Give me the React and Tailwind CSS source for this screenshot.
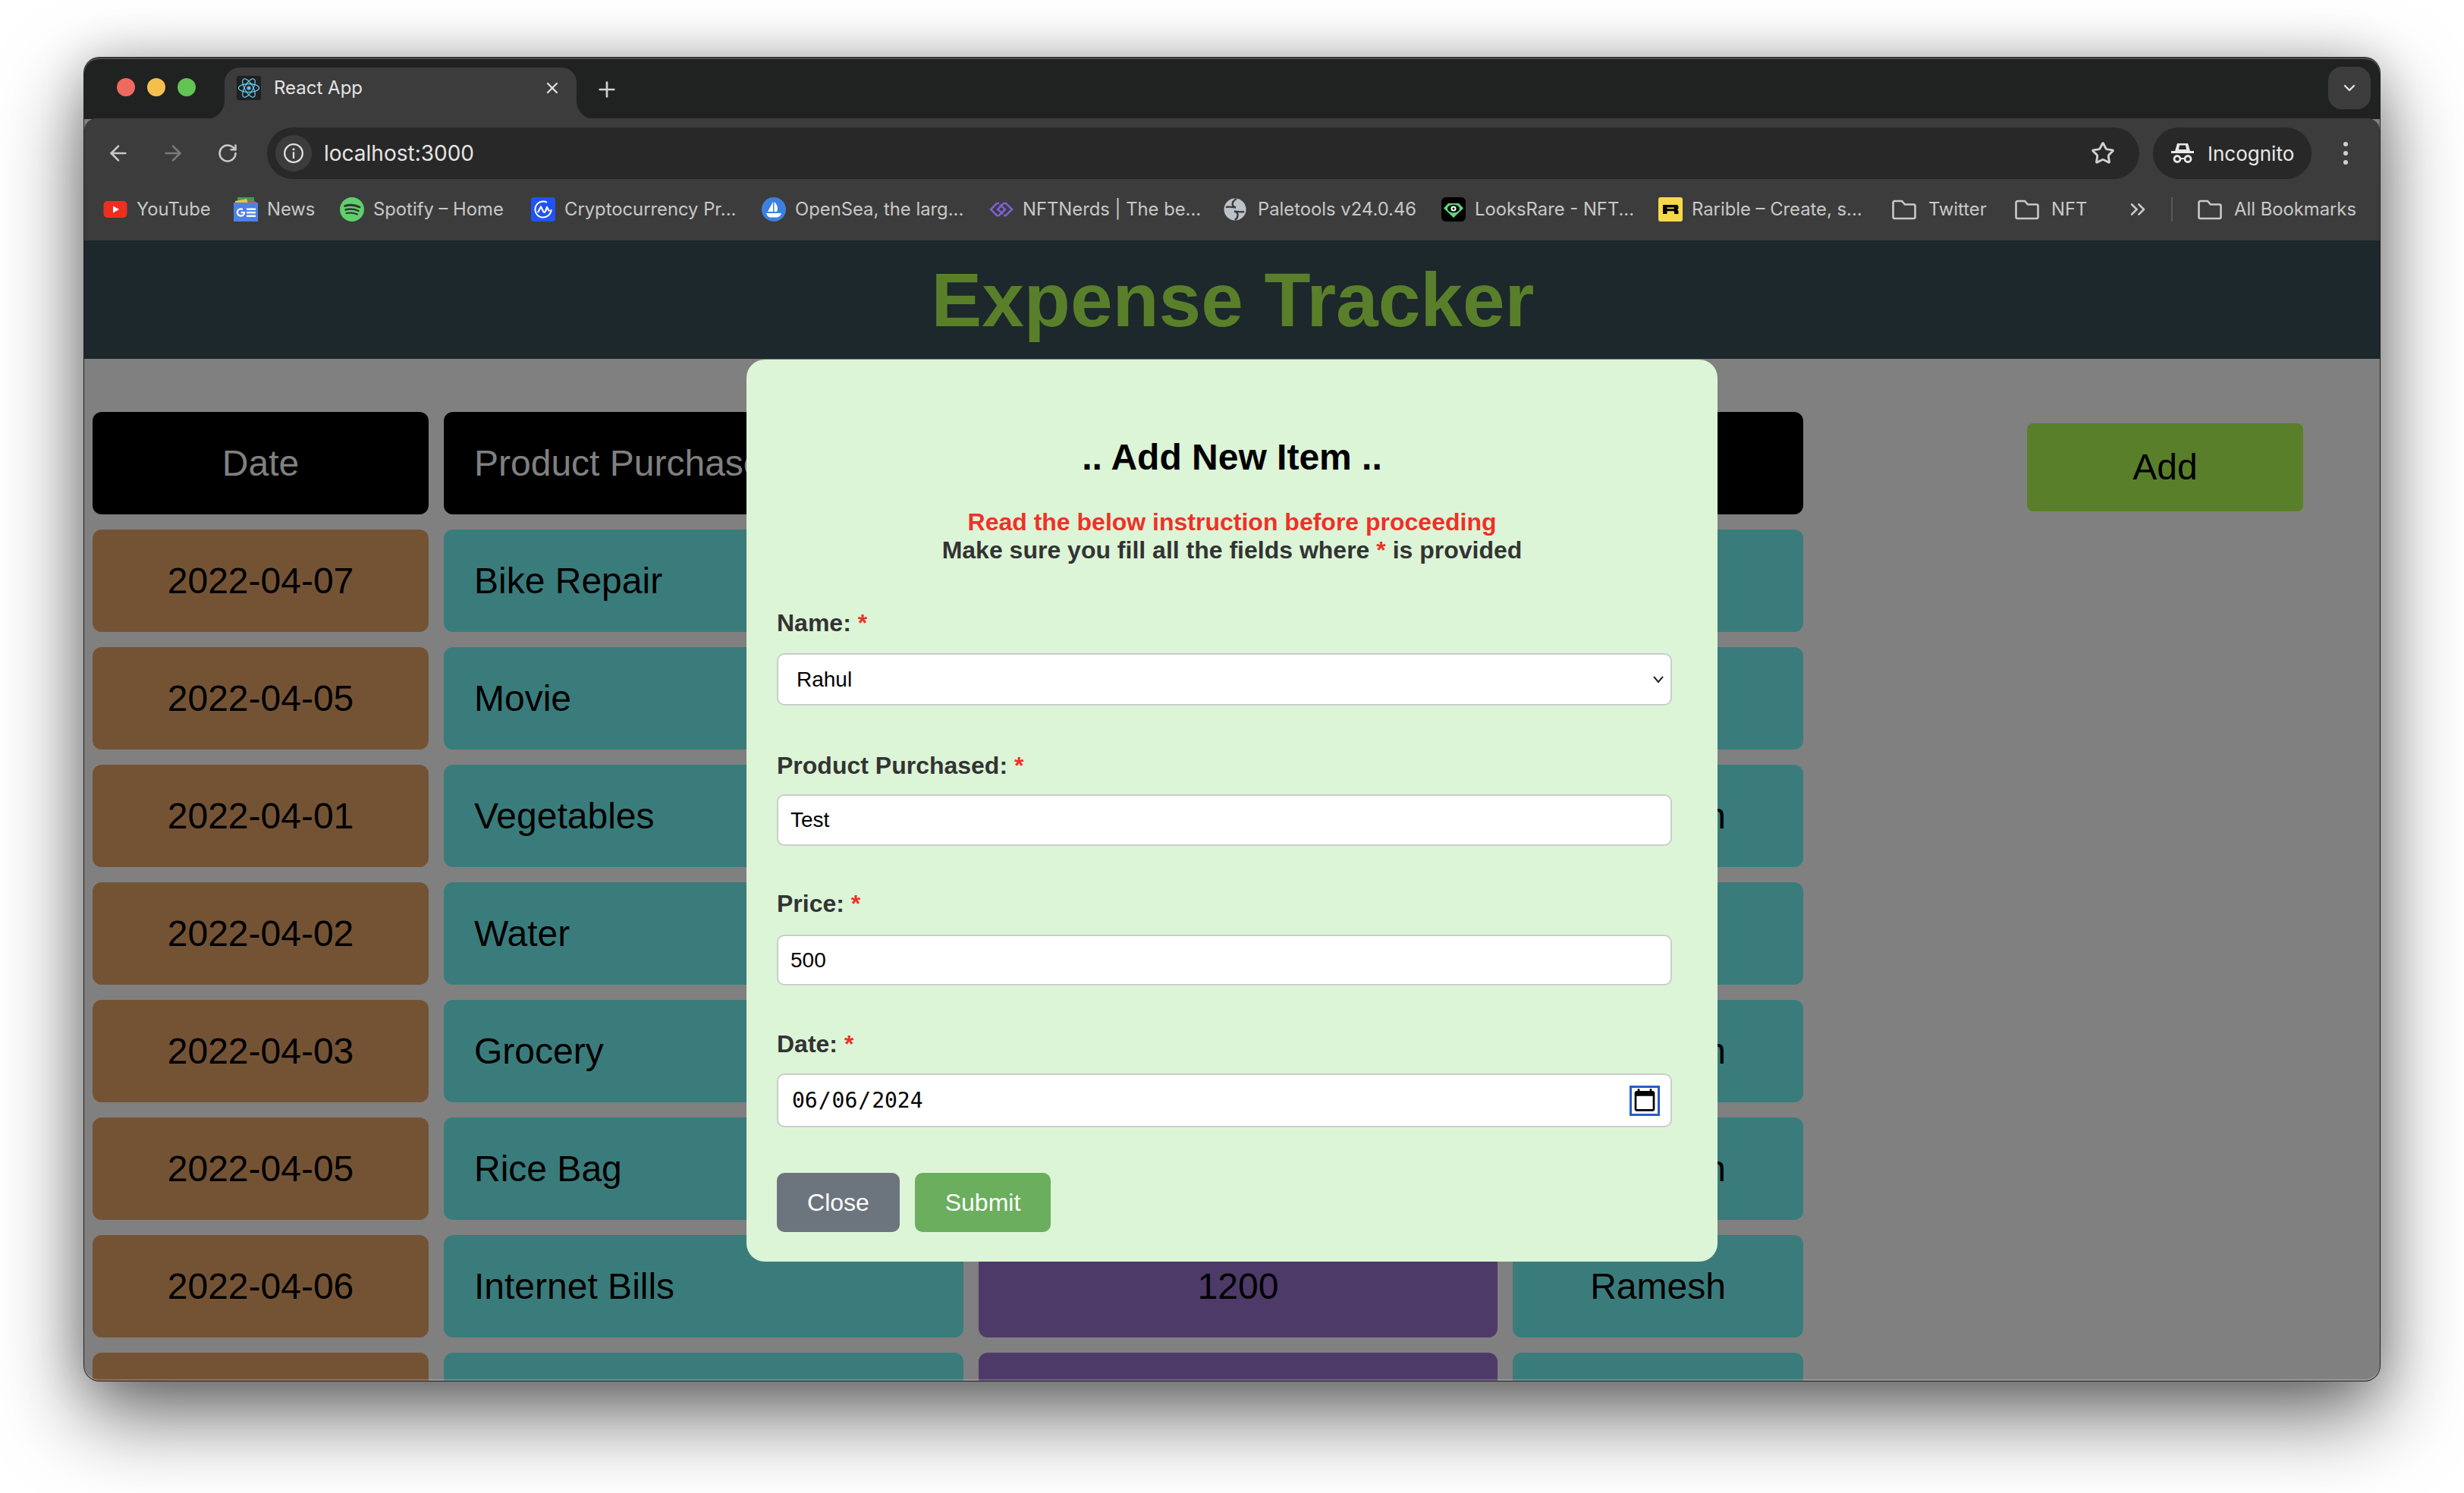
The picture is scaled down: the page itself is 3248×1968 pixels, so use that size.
import { ArrowLeft, ArrowRight, RotateCw, Star, X, Plus, ChevronDown, ChevronsRight } from 'lucide-react';

const rows = [
    { date: '2022-04-07', product: 'Bike Repair', price: '800', name: 'Rahul' },
    { date: '2022-04-05', product: 'Movie', price: '500', name: 'Rahul' },
    { date: '2022-04-01', product: 'Vegetables', price: '300', name: 'Ramesh' },
    { date: '2022-04-02', product: 'Water', price: '100', name: 'Rahul' },
    { date: '2022-04-03', product: 'Grocery', price: '2000', name: 'Ramesh' },
    { date: '2022-04-05', product: 'Rice Bag', price: '1500', name: 'Ramesh' },
    { date: '2022-04-06', product: 'Internet Bills', price: '1200', name: 'Ramesh' },
    { date: '', product: '', price: '', name: '' },
];

function ReactLogo() {
    return (
        <svg viewBox="0 0 32 32" className="w-8 h-8 rounded-[3px] bg-[#1f2121]">
            <g fill="none" stroke="#61c4e8" strokeWidth="1.3">
                <ellipse cx="16" cy="16" rx="13.5" ry="5.5" />
                <ellipse cx="16" cy="16" rx="13.5" ry="5.5" transform="rotate(60 16 16)" />
                <ellipse cx="16" cy="16" rx="13.5" ry="5.5" transform="rotate(120 16 16)" />
            </g>
            <circle cx="16" cy="16" r="2.6" fill="#61c4e8" />
        </svg>
    );
}

function YouTubeIcon() {
    return (
        <svg viewBox="0 0 32 32" className="w-8 h-8">
            <rect x="0.5" y="5" width="31" height="22" rx="5" fill="#ee2f20" />
            <path d="M13 11.5 L21 16 L13 20.5 Z" fill="#fff" />
        </svg>
    );
}

function NewsIcon() {
    return (
        <svg viewBox="0 0 32 32" className="w-8 h-8">
            <rect x="5" y="0" width="22" height="8" fill="#3f9a5a" />
            <path d="M2 5 L17 2 L19 8 L2 8 Z" fill="#f3bf3f" />
            <path d="M19 4 L30 6 L30 8 L19 8 Z" fill="#d9503f" />
            <rect x="0" y="7" width="32" height="25" fill="#4f80e8" />
            <circle cx="9.5" cy="20" r="4.6" fill="none" stroke="#fff" strokeWidth="2.4" />
            <rect x="9.5" y="19" width="5" height="2.2" fill="#fff" />
            <rect x="12" y="15" width="3" height="4" fill="#4f80e8" />
            <rect x="17" y="14.5" width="12" height="2.4" fill="#fff" />
            <rect x="17" y="19" width="12" height="2.4" fill="#fff" />
            <rect x="17" y="23.5" width="12" height="2.4" fill="#fff" />
        </svg>
    );
}

function SpotifyIcon() {
    return (
        <svg viewBox="0 0 32 32" className="w-8 h-8">
            <circle cx="16" cy="16" r="16" fill="#5fcf6c" />
            <g fill="none" stroke="#333" strokeLinecap="round">
                <path d="M6.5 11.5 C13 9.5 20 10 26 13" strokeWidth="2.8" />
                <path d="M7.5 16.5 C13 15 19.5 15.5 24.5 18" strokeWidth="2.4" />
                <path d="M8.5 21 C13 20 18.5 20.5 23 22.5" strokeWidth="2" />
            </g>
        </svg>
    );
}

function CoinIcon() {
    return (
        <svg viewBox="0 0 32 32" className="w-8 h-8">
            <rect width="32" height="32" rx="4" fill="#2152f5" />
            <path d="M26.5 16 A10.5 10.5 0 1 1 21 6.8" fill="none" stroke="#fff" strokeWidth="2" />
            <path d="M9 20 L13 12.5 L16 18.5 C17 20.5 18 20.5 19 18.5 L21 13 L24 18.5" fill="none" stroke="#fff" strokeWidth="2.2" strokeLinejoin="round" />
        </svg>
    );
}

function OpenSeaIcon() {
    return (
        <svg viewBox="0 0 32 32" className="w-8 h-8">
            <circle cx="16" cy="16" r="16" fill="#3d80e0" />
            <path d="M15 6 L15 19 L8 19 Z M16.5 6 C21 10 22 15 20 19 L16.5 19 Z" fill="#fff" />
            <path d="M6 21 L26 21 C25 25 22 26.5 20 26.5 L11 26.5 C9 26.5 7 24 6 21 Z" fill="#fff" />
        </svg>
    );
}

function NerdsIcon() {
    return (
        <svg viewBox="0 0 32 32" className="w-8 h-8">
            <g fill="none" stroke="#7c5fd6" strokeWidth="2.6">
                <path d="M13 8 L10 8 L2 16 L10 24 L13 24 L21 16 L14 10" />
                <path d="M19 24 L22 24 L30 16 L22 8 L19 8 L11 16 L18 22" />
            </g>
        </svg>
    );
}

function PaletoolsIcon() {
    return (
        <svg viewBox="0 0 32 32" className="w-8 h-8 -ml-[2px] mr-[2px]">
            <circle cx="16" cy="16" r="14.5" fill="#bdc1c8" />
            <path d="M18 2 C11 6 11 12 17 13.5 C12 13 8 12 4 13 M16 30 C21 26 21 20 15 18.5 C20 19 24 20 28 19" fill="none" stroke="#3c3c3c" strokeWidth="2.4" />
        </svg>
    );
}

function LooksIcon() {
    return (
        <svg viewBox="0 0 32 32" className="w-8 h-8">
            <rect width="32" height="32" rx="6" fill="#000" />
            <path d="M16 27 L3 14.5 L9 8 L23 8 L29 14.5 Z" fill="#5fd67a" />
            <ellipse cx="16" cy="15" rx="8" ry="5.2" fill="#000" />
            <circle cx="16" cy="15" r="3.6" fill="#fff" />
            <circle cx="16" cy="15" r="1.5" fill="#000" />
        </svg>
    );
}

function RaribleIcon() {
    return (
        <svg viewBox="0 0 32 32" className="w-8 h-8">
            <rect width="32" height="32" rx="3" fill="#f6d94a" />
            <path fillRule="evenodd" d="M6 10 L24 10 C26 10 26.5 11.5 26.5 13.5 C26.5 15 26 16 24.5 16.3 C26 16.6 26.5 17.5 26.5 19 L26.5 22 L21 22 L21 19.5 C21 18.5 20.5 18.2 19.5 18.2 L11.5 18.2 L11.5 22 L6 22 Z M11.5 13.4 L11.5 15.2 L20 15.2 C20.8 15.2 21 14.8 21 14.3 C21 13.8 20.8 13.4 20 13.4 Z" fill="#000" />
        </svg>
    );
}

function FolderIcon() {
    return (
        <svg viewBox="0 0 32 32" className="w-8 h-8">
            <path d="M1.5 7 A2 2 0 0 1 3.500 5 L13 5 L17 9.500 L28.500 9.500 A2 2 0 0 1 30.500 11.500 L30.500 26 A2 2 0 0 1 28.500 28 L3.500 28 A2 2 0 0 1 1.500 26 Z" fill="none" stroke="#c8c8c8" strokeWidth="2.600" />
        </svg>
    );
}

function IncognitoIcon() {
    return (
        <svg viewBox="0 0 32 32" className="w-8 h-8">
            <path d="M9 3 L23 3 L26 13 L6 13 Z M12 5.500 L11 11 L21 11 L20 5.500 Z" fill="#e8e8e8" fillRule="evenodd" />
            <rect x="1" y="13" width="30" height="3" fill="#e8e8e8" />
            <g fill="none" stroke="#e8e8e8" strokeWidth="2.800">
                <circle cx="9" cy="23.500" r="4" />
                <circle cx="23" cy="23.500" r="4" />
            </g>
            <path d="M13 23 L19 23" stroke="#e8e8e8" strokeWidth="2" />
        </svg>
    );
}

function InfoIcon() {
    return (
        <svg viewBox="0 0 32 32" className="w-7 h-7">
            <circle cx="16" cy="16" r="13.500" fill="none" stroke="#e0e0e0" strokeWidth="2.600" />
            <rect x="14.700" y="14" width="2.600" height="10" fill="#e0e0e0" />
            <circle cx="16" cy="10" r="1.800" fill="#e0e0e0" />
        </svg>
    );
}

const bookmarks = [
    { label: 'YouTube', icon: <YouTubeIcon />, width: 'w-[172px]' },
    { label: 'News', icon: <NewsIcon />, width: 'w-[140px]' },
    { label: 'Spotify – Home', icon: <SpotifyIcon />, width: 'w-[252px]' },
    { label: 'Cryptocurrency Pr...', icon: <CoinIcon />, width: 'w-[304px]' },
    { label: 'OpenSea, the larg...', icon: <OpenSeaIcon />, width: 'w-[300px]' },
    { label: 'NFTNerds | The be...', icon: <NerdsIcon />, width: 'w-[310px]' },
    { label: 'Paletools v24.0.46', icon: <PaletoolsIcon />, width: 'w-[286px]' },
    { label: 'LooksRare - NFT...', icon: <LooksIcon />, width: 'w-[286px]' },
    { label: 'Rarible – Create, s...', icon: <RaribleIcon />, width: 'w-[308px]' },
];

function Bookmark({ item }) {
    return (
        <div className={`flex items-center gap-3 shrink-0 ${item.width}`}>
            {item.icon}
            <span className="text-[23.8px] whitespace-nowrap">{item.label}</span>
        </div>
    );
}

function BrowserChrome() {
    return (
        <div className="font-['Inter',sans-serif]">
            <div className="h-[81px] bg-[#202221] flex">
                <div className="flex items-center gap-4 pl-[43px] pb-[4px] h-[81px]">
                    <span className="w-6 h-6 rounded-full bg-[#ee6a5f]" />
                    <span className="w-6 h-6 rounded-full bg-[#f5bf4f]" />
                    <span className="w-6 h-6 rounded-full bg-[#61c454]" />
                </div>
                <div className="relative self-end ml-[38px] w-[464px] h-[68px] bg-[#3c3c3c] rounded-t-[20px] flex items-center pl-4 pr-5 pb-[15px] text-[#e4e4e4]">
                    <svg viewBox="0 0 24 24" className="absolute bottom-0 -left-6 w-6 h-6">
                        <path d="M24 0 V24 H0 A24 24 0 0 0 24 0 Z" fill="#3c3c3c" />
                    </svg>
                    <svg viewBox="0 0 24 24" className="absolute bottom-0 -right-6 w-6 h-6">
                        <path d="M0 0 V24 H24 A24 24 0 0 1 0 0 Z" fill="#3c3c3c" />
                    </svg>
                    <ReactLogo />
                    <span className="ml-[17px] text-2xl">React App</span>
                    <X className="ml-auto w-6 h-6" strokeWidth={2.2} />
                </div>
                <div className="flex items-center pl-[24px] pt-[3px] text-[#d0d0d0]">
                    <Plus className="w-8 h-8" strokeWidth={2} />
                </div>
                <div className="ml-auto mr-[12px] mt-[12px] w-14 h-[56px] rounded-[18px] bg-[#3c3c3c] flex items-center justify-center text-[#e4e4e4]">
                    <ChevronDown className="w-6 h-6" strokeWidth={2.4} />
                </div>
            </div>
            <div className="h-[161px] bg-[#3c3c3c] rounded-t-[16px] -mt-[1px]">
                <div className="flex items-center pt-3 pl-[9px]">
                    <div className="w-[72px] flex justify-center text-[#c8c8c8]"><ArrowLeft className="w-8 h-8" strokeWidth={2} /></div>
                    <div className="w-[72px] flex justify-center text-[#7a7a7a]"><ArrowRight className="w-8 h-8" strokeWidth={2} /></div>
                    <div className="w-[72px] flex justify-center text-[#c8c8c8]"><RotateCw className="w-7 h-7" strokeWidth={2.2} /></div>
                    <div className="ml-[16px] w-[2468px] h-[68px] rounded-full bg-[#282828] flex items-center pl-[11px] pr-[32px]">
                        <div className="w-[48px] h-[48px] rounded-full bg-[#3c3c3c] flex items-center justify-center"><InfoIcon /></div>
                        <span className="ml-4 text-[28px] text-[#e4e4e4]">localhost:3000</span>
                        <Star className="ml-auto w-8 h-8 text-[#d0d0d0]" strokeWidth={2.2} />
                    </div>
                    <div className="ml-[18px] w-[209px] h-[68px] rounded-full bg-[#282828] flex items-center pl-[23px] gap-[17px] text-[#e8e8e8]">
                        <IncognitoIcon />
                        <span className="text-[26px]">Incognito</span>
                    </div>
                    <div className="ml-[42px] flex flex-col gap-[6px]">
                        <span className="w-[6px] h-[6px] rounded-full bg-[#d0d0d0]" />
                        <span className="w-[6px] h-[6px] rounded-full bg-[#d0d0d0]" />
                        <span className="w-[6px] h-[6px] rounded-full bg-[#d0d0d0]" />
                    </div>
                </div>
                <div className="h-[79px] flex items-center pl-[25px] text-[#c8c8c8]">
                    {bookmarks.map((item) => (
                        <Bookmark key={item.label} item={item} />
                    ))}
                    <div className="flex items-center gap-4 w-[162px] shrink-0">
                        <FolderIcon />
                        <span className="text-[23.8px]">Twitter</span>
                    </div>
                    <div className="flex items-center gap-4 w-[146px] shrink-0">
                        <FolderIcon />
                        <span className="text-[23.8px]">NFT</span>
                    </div>
                    <ChevronsRight className="w-8 h-8" strokeWidth={2} />
                    <div className="ml-[28px] w-[2px] h-8 bg-[#5a5a5a]" />
                    <div className="ml-[33px] flex items-center gap-4">
                        <FolderIcon />
                        <span className="text-[23.8px] whitespace-nowrap">All Bookmarks</span>
                    </div>
                </div>
            </div>
        </div>
    );
}

function ExpenseGrid() {
    return (
        <div className="grid grid-cols-[443px_685px_684px_383px] auto-rows-[135px] gap-5 text-[48px] text-black">
            <div className="bg-black rounded-xl flex items-center justify-center text-[#808080]">Date</div>
            <div className="bg-black rounded-xl flex items-center pl-10 text-[#808080]">Product Purchased</div>
            <div className="bg-black rounded-xl flex items-center justify-center text-[#808080]">Price</div>
            <div className="bg-black rounded-xl flex items-center justify-center text-[#808080]">Name</div>
            {rows.map((row, i) => (
                <div key={i} className="contents">
                    <div className="bg-[#745335] rounded-xl flex items-center justify-center">{row.date}</div>
                    <div className="bg-[#3a7c7c] rounded-xl flex items-center pl-10">{row.product}</div>
                    <div className="bg-[#4e3a68] rounded-xl flex items-center justify-center">{row.price}</div>
                    <div className="bg-[#3a7c7c] rounded-xl flex items-center justify-center">{row.name}</div>
                </div>
            ))}
        </div>
    );
}

function Label({ children, className }) {
    return (
        <label className={`block text-[32px] leading-[37px] font-bold text-[#333] ${className}`}>
            {children}: <span className="text-[#f03028]">*</span>
        </label>
    );
}

const fieldClass = 'block w-full bg-white border-2 border-[#ccc] rounded-[10px] text-[28px] text-black outline-none';

function AddItemModal() {
    return (
        <div className="absolute left-[873px] top-[157px] w-[1280px] bg-[#dcf5d7] rounded-[24px] pl-10 pr-[60px] pt-[102px] pb-[39px]">
            <h2 className="text-[48px] leading-[53px] font-bold text-black text-center pl-5">.. Add New Item ..</h2>
            <div className="mt-[41px] text-[32px] leading-[37px] font-bold text-center text-[#333] pl-5">
                <p className="text-[#f03028]">Read the below instruction before proceeding</p>
                <p>Make sure you fill all the fields where <span className="text-[#f03028]">*</span> is provided</p>
            </div>

            <Label className="mt-[59px]">Name</Label>
            <div className="relative mt-[21px]">
                <select defaultValue="Rahul" className={`${fieldClass} appearance-none h-[69px] pl-6`}>
                    <option>Rahul</option>
                    <option>Ramesh</option>
                </select>
                <svg viewBox="0 0 16 16" className="absolute right-[10px] top-[26px] w-4 h-4">
                    <path d="M2 5 L8 12 L14 5" fill="none" stroke="#222" strokeWidth="2" />
                </svg>
            </div>

            <Label className="mt-[61px]">Product Purchased</Label>
            <input type="text" defaultValue="Test" className={`${fieldClass} mt-[19px] h-[68px] px-4`} />

            <Label className="mt-[58px]">Price</Label>
            <input type="text" defaultValue="500" className={`${fieldClass} mt-[22px] h-[67px] px-4`} />

            <Label className="mt-[59px]">Date</Label>
            <input
                type="date"
                defaultValue="2024-06-06"
                className={`${fieldClass} mt-[20px] h-[71px] pl-[17px] pr-[14px] font-['DejaVu_Sans_Mono',monospace] [&::-webkit-calendar-picker-indicator]:w-[34px] [&::-webkit-calendar-picker-indicator]:h-[34px] [&::-webkit-calendar-picker-indicator]:p-0 [&::-webkit-calendar-picker-indicator]:m-0 [&::-webkit-calendar-picker-indicator]:border-[3px] [&::-webkit-calendar-picker-indicator]:border-[#2a5cc8]`}
            />

            <div className="mt-[60px] flex gap-5">
                <button className="w-[162px] h-[78px] rounded-[10px] bg-[#6c757d] text-white text-[32px]">Close</button>
                <button className="w-[179px] h-[78px] rounded-[10px] bg-[#6aae5e] text-white text-[32px]">Submit</button>
            </div>
        </div>
    );
}

export default function App() {
    return (
        <div className="w-[3248px] h-[1968px] bg-white overflow-hidden pl-[111px] pt-[76px] font-['Liberation_Sans',Arial,sans-serif]">
            <div className="relative w-[3026px] h-[1744px] rounded-[20px] bg-[#808080] shadow-[0_0_0_1px_#222,0_44px_110px_rgba(0,0,0,0.6),0_0_60px_rgba(0,0,0,0.18)] overflow-hidden flex flex-col">
                <BrowserChrome />
                <div className="relative flex-1 overflow-hidden">
                    <header className="h-[156px] bg-[#1c282b] flex items-center justify-center">
                        <h1 className="text-[100px] font-bold text-[#5a7f2a] translate-x-[1px]">Expense Tracker</h1>
                    </header>
                    <div className="flex pl-[11px] pt-[70px]">
                        <ExpenseGrid />
                        <button className="ml-[295px] mt-[15px] w-[364px] h-[116px] rounded-lg bg-[#5a7f2a] text-black text-[48px] shrink-0">Add</button>
                    </div>
                    <AddItemModal />
                </div>
                <div className="absolute inset-0 rounded-[20px] pointer-events-none shadow-[inset_0_2px_0_rgba(255,255,255,0.2),inset_0_-2px_0_rgba(255,255,255,0.2)]" />
            </div>
        </div>
    );
}
